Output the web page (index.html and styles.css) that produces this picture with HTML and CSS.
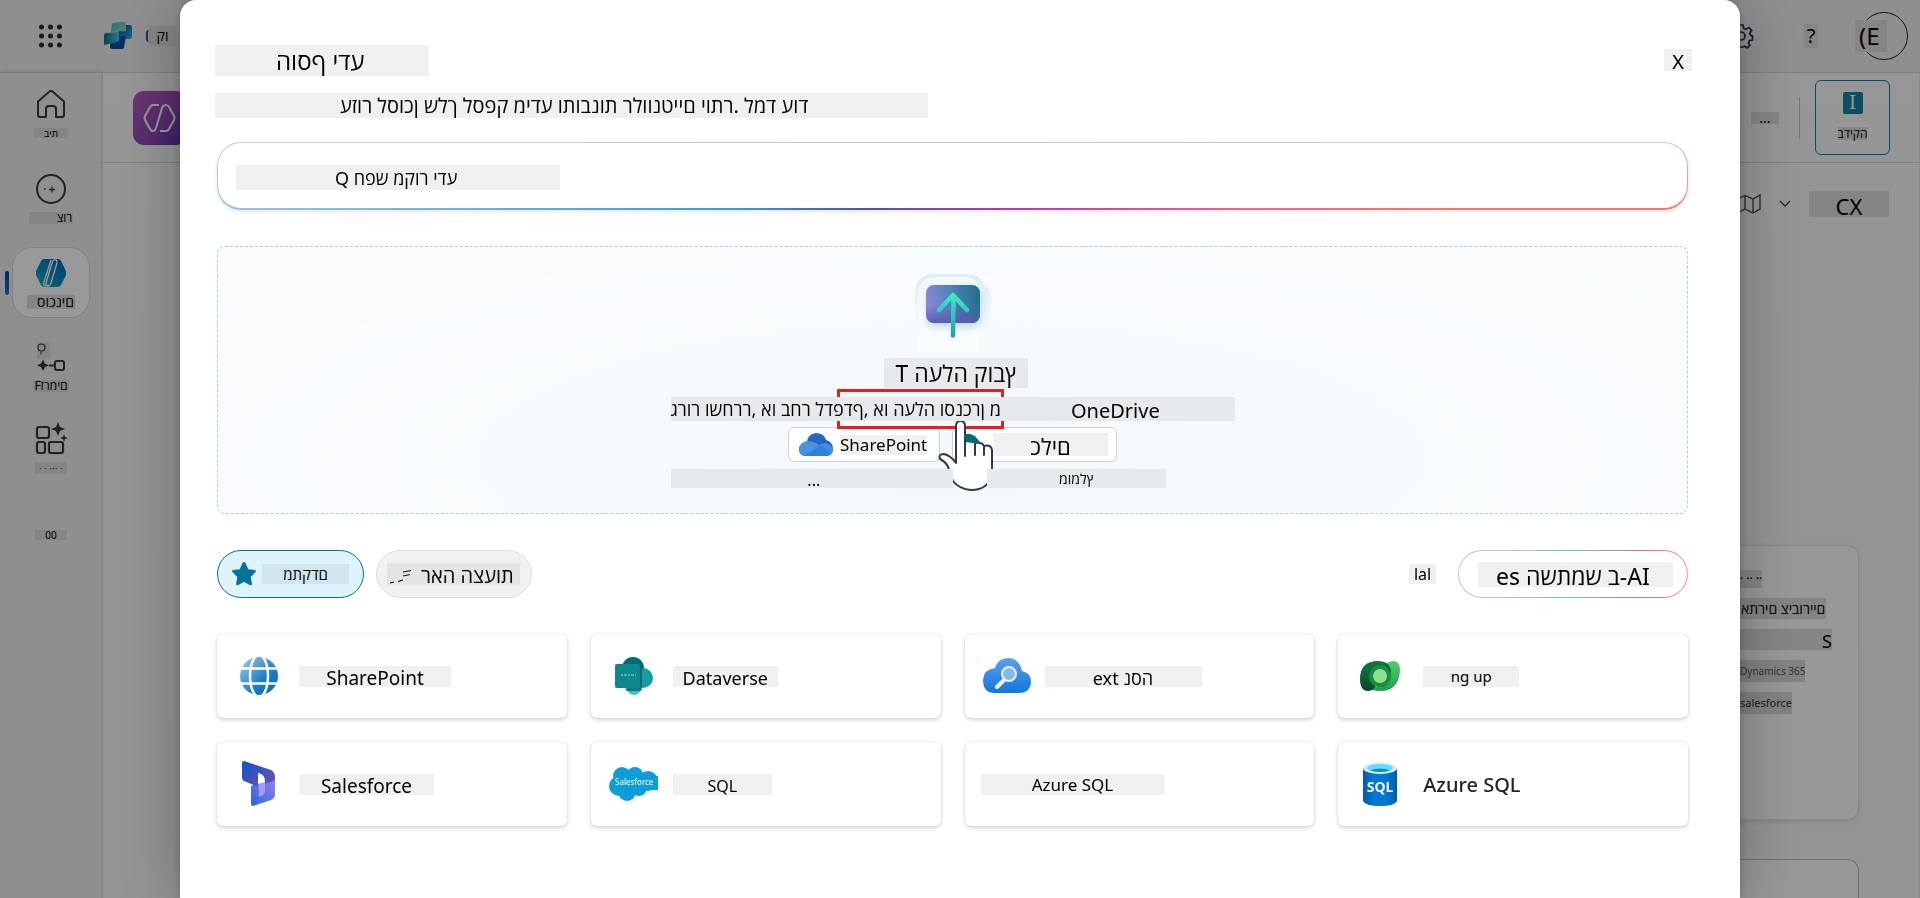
FILE: index.html
```html
<!DOCTYPE html>
<html lang="he">
<head>
<meta charset="utf-8">
<title>הוסף ידע</title>
<link rel="stylesheet" href="styles.css">
</head>
<body>
<div class="app">
  <header class="topbar">
    <button class="icon-button waffle" aria-label="Apps">
      <svg width="24" height="24" viewBox="0 0 24 24" fill="#2b2b33"><circle cx="2.500" cy="3" r="2.500"/><circle cx="11.500" cy="3" r="2.500"/><circle cx="20.500" cy="3" r="2.500"/><circle cx="2.500" cy="12" r="2.500"/><circle cx="11.500" cy="12" r="2.500"/><circle cx="20.500" cy="12" r="2.500"/><circle cx="2.500" cy="21" r="2.500"/><circle cx="11.500" cy="21" r="2.500"/><circle cx="20.500" cy="21" r="2.500"/></svg>
    </button>
    <svg class="brand" width="30" height="28" viewBox="0 0 30 28">
      <defs>
        <linearGradient id="b1" x1="0" y1="0" x2="1" y2="1"><stop offset="0" stop-color="#3cb4d8"/><stop offset="1" stop-color="#8fe8b4"/></linearGradient>
        <linearGradient id="b2" x1="0" y1="0" x2="1" y2="1"><stop offset="0" stop-color="#0a3f9e"/><stop offset="1" stop-color="#22b4e0"/></linearGradient>
        <linearGradient id="b3" x1="0" y1="0" x2="1" y2="0"><stop offset="0" stop-color="#12708f"/><stop offset="1" stop-color="#3bd0e4"/></linearGradient>
      </defs>
      <rect x="15" y="3" width="14" height="14" rx="2" fill="url(#b2)"/>
      <path d="M8 14h15l-2 11q0 2-2 2H9q-2 0-2-2z" fill="#064cab"/>
      <path d="M9 2q0-1 2-1l10-1q2 0 2 2v7L8 10z" fill="url(#b1)"/>
      <path d="M1 13q0-2 2-2l13-1v8q0 2-2 2L1 23z" fill="url(#b3)"/>
    </svg>
    <span class="brand-name"><span class="brand-arc"></span><span class="patch bidi">קו</span><span class="brand-tail">p</span></span>
    <span class="spacer"></span>
    <button class="icon-button" aria-label="Settings">
      <svg width="26" height="26" viewBox="0 0 26 26" fill="none" stroke="#1f3350" stroke-width="1.700"><path d="M11 2h4l.700 3.400 2.300 1 2.900-1.900 2.800 2.800-1.900 2.900 1 2.300 1.700.500v4l-3 .600-1 2.100 1.400 2.700-2.700 2.500-2.700-1.600-2 .900L13.800 24h-2.600l-.900-3.200-2.300-.900-2.700 1.600-2.700-2.600 1.700-2.800-1-2.100L2 13.500v-2l2-.600 1-2.200-1.800-2.900 2.700-2.700L8.600 5l1.700-.800z"/><circle cx="13" cy="13" r="4"/></svg>
    </button>
    <button class="icon-button patch help" aria-label="Help">?</button>
    <button class="avatar" aria-label="Account"><span class="patch">(E</span></button>
  </header>

  <div class="workspace">
    <nav class="rail">
      <a class="rail-item" href="#home">
        <svg width="30" height="30" viewBox="0 0 30 30" fill="none" stroke="#3a3a3a" stroke-width="2" stroke-linejoin="round"><path d="M2 11.500 13.500 1.500q1.500-1.200 3 0l11.500 10V25q0 2-2 2h-6v-8q0-3-3-3h-4q-3 0-3 3v8H4q-2 0-2-2z"/></svg>
        <span class="patch bidi rail-small">בית</span>
      </a>
      <a class="rail-item" href="#create">
        <svg width="30" height="30" viewBox="0 0 30 30" fill="none" stroke="#3a3a3a" stroke-width="2"><circle cx="15" cy="15" r="14"/><path d="M13 15.500h6M16 12.500v6M8 15h1.500" stroke-width="1.300"/></svg>
        <span class="patch bidi rail-end">צור</span>
      </a>
      <a class="rail-item active" href="#agents">
        <svg width="30" height="28" viewBox="0 0 30 28"><defs><linearGradient id="ag" x1="0" y1="1" x2="1" y2="0"><stop offset="0" stop-color="#14b2cc"/><stop offset="1" stop-color="#0a62b4"/></linearGradient></defs><path d="M8 0h14q2 0 3 2l5 10q1 2 0 4l-5 10q-1 2-3 2H8q-2 0-3-2L0 16q-1-2 0-4L5 2Q6 0 8 0z" fill="url(#ag)"/><path d="M15 1 8 23q-1 4 2 4M20 1q-3-1-4 3l-6 20q0 3 2 3 2 0 3-3l6-20q0-3-1-3" stroke="#fff" stroke-width="1.300" fill="none"/></svg>
        <span class="patch bidi rail-strong">סוכנים</span>
      </a>
      <a class="rail-item" href="#flows">
        <svg width="30" height="30" viewBox="0 0 30 30" fill="none" stroke="#3a3a3a" stroke-width="2"><rect x="1" y="0" width="13" height="17" fill="#dedede" stroke="none"/><path d="M13 23.500h6" /><rect x="19" y="19" width="9" height="9" rx="2"/><circle cx="5.500" cy="5.500" r="3.500" stroke-width="1.200"/><path d="M5 9.500v3" stroke-width="1"/><path d="M7 17.500l2 4 4 2-4 1.500-2 4-2-4-4-1.500 4-2z" fill="#3a3a3a" stroke="none"/></svg>
        <span class="patch bidi rail-flow">Fזרמים</span>
      </a>
      <a class="rail-item rail-tools" href="#tools">
        <svg width="34" height="32" viewBox="0 0 34 32" fill="none" stroke="#3a3a3a" stroke-width="2.200"><rect x="3" y="5" width="12" height="11" rx="2"/><rect x="3" y="20" width="8" height="11" rx="2"/><rect x="15" y="20" width="14" height="11" rx="2"/><path d="M24 0l2 5 5 2-5 2-2 5-2-5-5-2 5-2zM30 12l1 3 3 1-3 1-1 3-1-3-3-1 3-1z" fill="#3a3a3a" stroke="none"/></svg>
        <span class="patch rail-dots">· · ··· ·</span>
      </a>
      <a class="rail-item rail-last" href="#more"><span class="patch rail-small">00</span></a>
    </nav>

    <main class="page">
      <div class="agent-bar">
        <svg class="agent-logo" width="54" height="54" viewBox="0 0 54 54"><defs><linearGradient id="pl" x1="0" y1="0" x2="1" y2="1"><stop offset="0" stop-color="#b45cc0"/><stop offset="0.600" stop-color="#9048b8"/><stop offset="1" stop-color="#5230b8"/></linearGradient></defs><rect width="54" height="54" rx="11" fill="url(#pl)"/><path d="M26 14H20q-2 0-3 2l-5 9q-1 2 0 4l5 9q1 2 3 2 2 0 3-3l6-20q1-3 4-3 2 0 3 2l5 9q1 2 0 4l-5 9q-1 2-3 2h-6" fill="none" stroke="#fff" stroke-width="2"/></svg>
        <span class="spacer"></span>
        <span class="patch more">...</span>
        <span class="divider"></span>
        <button class="test-button">
          <span class="test-mark">I</span>
          <span class="patch bidi">בדיקה</span>
        </button>
      </div>
      <div class="toolbar">
        <svg width="24" height="24" viewBox="0 0 24 24" fill="none" stroke="#404040" stroke-width="1.300"><path d="M1 7l7-3.500 8 3.500 7-4v14l-7 4-8-4-7 4zM8 3.500v14M16 7v14"/></svg>
        <svg width="12" height="8" viewBox="0 0 12 8" fill="none" stroke="#404040" stroke-width="1.300"><path d="M1 1l5 5 5-5"/></svg>
        <span class="patch toolbar-label">CX</span>
      </div>
      <section class="side-card">
        <span class="patch side-dots">· ·· ··</span>
        <span class="patch bidi side-title">אתרים ציבוריים</span>
        <span class="patch side-s">S</span>
        <span class="patch side-faint">Dynamics 365</span>
        <span class="patch side-faint side-dark">salesforce</span>
      </section>
      <section class="side-card side-card-next"></section>
    </main>
  </div>
</div>

<div class="backdrop">
  <div class="dialog" role="dialog" aria-labelledby="dialog-title">
    <div class="dialog-head">
      <h1 id="dialog-title" class="chip bidi">הוסף ידע</h1>
      <button class="chip close">X</button>
    </div>
    <p class="chip bidi intro">עזור לסוכן שלך לספק מידע ותובנות רלוונטיים יותר. למד עוד</p>

    <div class="search">
      <input class="chip" type="text" aria-label="Search" placeholder="&#x202D;Q חפש מקור ידע">
    </div>

    <section class="drop">
      <svg class="upload-icon" width="76" height="80" viewBox="0 0 76 80">
        <defs>
          <linearGradient id="up" x1="0" y1="0.500" x2="1" y2="0.400"><stop offset="0" stop-color="#8f86dc"/><stop offset="0.450" stop-color="#4f83b8"/><stop offset="1" stop-color="#24708c"/></linearGradient>
          <linearGradient id="upl" x1="0" y1="0" x2="0" y2="1"><stop offset="0.550" stop-color="#5358a8" stop-opacity="0"/><stop offset="1" stop-color="#5a55b0" stop-opacity="0.900"/></linearGradient>
          <linearGradient id="arr" x1="0" y1="0" x2="0" y2="1"><stop offset="0" stop-color="#40e8c8"/><stop offset="1" stop-color="#2c9cb0"/></linearGradient>
          <linearGradient id="glass" x1="0" y1="0" x2="0" y2="1"><stop offset="0" stop-color="#dfecef"/><stop offset="0.500" stop-color="#f1f8fb"/><stop offset="1" stop-color="#fafcfe" stop-opacity="0"/></linearGradient>
          <filter id="soft" x="-30%" y="-30%" width="160%" height="160%"><feGaussianBlur stdDeviation="4"/></filter>
        </defs>
        <path d="M0 78V20Q0 0 20 0h30q16 0 18 10 8 4 8 14v54z" fill="url(#glass)"/>
        <path d="M3 78V22Q3 3 22 3h28q14 0 14 17v58z" fill="#fafdfe" opacity="0.700"/>
        <rect x="12" y="15" width="54" height="38" rx="8" fill="#a5c7de" filter="url(#soft)" opacity="0.700"/>
        <rect x="11" y="11" width="54" height="38" rx="8" fill="url(#up)"/>
        <rect x="11" y="11" width="54" height="38" rx="8" fill="url(#upl)"/>
        <path d="M38.500 22 38 61.500M24 36l14-15 14 15" fill="none" stroke="url(#arr)" stroke-width="4.500" stroke-linecap="round" stroke-linejoin="round"/>
      </svg>
      <h2 class="shade bidi drop-title">T העלה קובץ</h2>
      <p class="shade drop-text"><span class="bidi">גרור ושחרר, או בחר לדפדף, או העלה וסנכרן מ</span><span class="onedrive">OneDrive</span></p>
      <div class="sources">
        <span class="highlight"></span>
        <button class="source">
          <svg width="34" height="24" viewBox="0 0 34 24"><defs><linearGradient id="od" x1="0" y1="0" x2="0" y2="1"><stop offset="0" stop-color="#2f68c4"/><stop offset="1" stop-color="#1e58b8"/></linearGradient></defs><path d="M8 10Q8 1 17 0q8 0 10 7 7 2 7 9 0 7-7 7H7q-7 0-7-7 0-5 8-6z" fill="url(#od)"/><path d="M8 8Q1 9 0 16q0 7 8 7l14-10Q15 8 8 8z" fill="#4a94e4"/><path d="M3 22 20 12q8-5 14 3 0 8-8 8H7z" fill="#3f8fe2"/><path d="M5 23 22 12l9 8q-2 3-6 3z" fill="#2f80da"/></svg>
          <span class="chip">SharePoint</span>
        </button>
        <button class="source source-tools">
          <span class="chip bidi">כלים</span>
        </button>
        <svg class="pointer" width="62" height="76" viewBox="0 0 62 76" fill="#fff" stroke="#34374a" stroke-width="2" stroke-linejoin="round" stroke-linecap="round"><path d="M19 44V7q0-5 4.500-5T28 7v14q6-3 10 3 6-2 9 3 7-2 8 4v21q0 10-7 15-5 4-14 4-12-1-18-9l-4-11Q11 44 3 40q-2-5 4-5 6 1 12 9z"/><path d="M27 16q9-5 17 9l-16-2z" fill="#036c70" stroke="none"/><path d="M28 20v17M38 25v11M47 28v8" fill="none"/></svg>
      </div>
      <div class="notes">
        <span class="shade note-dots">...</span>
        <span class="shade bidi note-rec">מומלץ</span>
      </div>
    </section>

    <div class="filters">
      <button class="pill pill-on">
        <svg width="24" height="24" viewBox="0 0 24 24" fill="#05729c"><path d="M12 0q1 0 1.600 1.200l2.700 6 6.400.900q1.700.500.900 1.900l-4.900 5 1.300 6.900q0 1.800-1.800 1.300L12 20l-6.200 3.200q-1.800.500-1.700-1.300L5.300 15 .400 10q-.800-1.400.900-1.900l6.400-.900 2.700-6Q11 0 12 0z"/></svg>
        <span class="bidi">מתקדם</span>
      </button>
      <button class="pill pill-off">
        <span class="pill-box"><svg width="24" height="16" viewBox="0 0 24 16" stroke="#111" stroke-width="1.200" fill="none"><path d="M14 4l8-1.500M14 8l7-1.500M1 15l4-1M9 13.500l5-1.500"/></svg><span class="bidi">ראה הצעות</span></span>
      </button>
      <span class="spacer"></span>
      <span class="chip lal">lal</span>
      <button class="pill pill-ai"><span class="chip bidi">es השתמש ב-AI</span></button>
    </div>

    <div class="grid">
      <button class="card">
        <svg width="40" height="40" viewBox="0 0 40 40"><defs><linearGradient id="gl" x1="0" y1="0" x2="1" y2="1"><stop offset="0" stop-color="#a9cdea"/><stop offset="0.600" stop-color="#1b7cc9"/><stop offset="1" stop-color="#0a62b4"/></linearGradient></defs><circle cx="20" cy="20" r="19" fill="url(#gl)"/><g stroke="#fff" stroke-width="2.500" fill="none"><ellipse cx="20" cy="20" rx="9" ry="21"/><path d="M0 12.500h40M0 27.500h40"/></g></svg>
        <span class="chip name-sharepoint">SharePoint</span>
      </button>
      <button class="card">
        <svg width="40" height="40" viewBox="0 0 40 40"><circle cx="20" cy="12" r="11" fill="#036c70"/><circle cx="30" cy="22" r="10" fill="#1a9ba1"/><circle cx="21" cy="32" r="7" fill="#37c6d0"/><path d="M8 10h21v23q0 2-2 2H13z" fill="#03565b" opacity="0.700"/><rect x="2" y="8" width="25" height="24" rx="2" fill="#0f888c"/><path d="M8 19h15" stroke="#d5f0f0" stroke-width="1" stroke-dasharray="2 1 3 1" opacity="0.700"/></svg>
        <span class="chip name-dataverse">Dataverse</span>
      </button>
      <button class="card card-wide-icon">
        <svg width="48" height="36" viewBox="0 0 48 36"><defs><linearGradient id="cs" x1="0" y1="0" x2="0" y2="1"><stop offset="0" stop-color="#5ea0ef"/><stop offset="1" stop-color="#1077db"/></linearGradient></defs><path d="M12 35Q0 35 0 22q1-11 12-12Q15 0 25 0q11 0 14 13 9 2 9 11-1 11-12 11z" fill="url(#cs)"/><path d="M14 29l8-8" stroke="#f2f2f2" stroke-width="4" stroke-linecap="round"/><circle cx="26" cy="16" r="7" fill="#83b9f9" stroke="#f2f2f2" stroke-width="2"/></svg>
        <span class="chip bidi name-next">ext נסה</span>
      </button>
      <button class="card card-loose">
        <svg width="40" height="40" viewBox="0 0 40 40"><defs><linearGradient id="dv1" x1="0" y1="0" x2="0" y2="1"><stop offset="0" stop-color="#0e7a3e"/><stop offset="1" stop-color="#064a2b"/></linearGradient><linearGradient id="dv2" x1="0" y1="0" x2="0" y2="1"><stop offset="0" stop-color="#51d267"/><stop offset="1" stop-color="#1f9c50"/></linearGradient></defs><path d="M24 12q3-7 9-7 7 0 7 9-1 21-20 21-8 0-10-3 13-1 14-11z" fill="url(#dv2)"/><path d="M0 23Q0 5 18 5q12 0 13 10 0 9-8 12 1-6-3-9l-6 4q-1 5 2 8-3 5-8 5-8 0-8-12z" fill="url(#dv1)"/><circle cx="20" cy="20" r="11" fill="#1b8a44"/><circle cx="20" cy="20" r="7" fill="#8ae38a"/></svg>
        <span class="chip name-small">ng up</span>
      </button>
      <button class="card">
        <svg width="40" height="46" viewBox="0 0 40 46"><defs><linearGradient id="d1" x1="0" y1="0" x2="1" y2="1"><stop offset="0" stop-color="#0b53ce"/><stop offset="1" stop-color="#7252aa"/></linearGradient><linearGradient id="d2" x1="1" y1="0" x2="0" y2="1"><stop offset="0" stop-color="#a47ff0"/><stop offset="1" stop-color="#2266e3"/></linearGradient></defs><path d="M12 25l24-10v18q0 4-4 6l-18 6q-2 0-2-2z" fill="url(#d2)"/><path d="M3 2q0-2 2-2l27 9q4 2 4 7 0 4-4 5l-15 4-12-5q-2-1-2-3z" fill="url(#d1)"/><path d="M19 13q7 0 7 7v9q0 6-6 7z" fill="#a79bf3"/><path d="M19 12q7 1 7 9l-7 2z" fill="#fff"/></svg>
        <span class="chip name-salesforce">Salesforce</span>
      </button>
      <button class="card card-wide-icon">
        <svg width="50" height="36" viewBox="0 0 50 36"><g fill="#0d9ddb"><circle cx="13" cy="10" r="9"/><circle cx="26" cy="9" r="8"/><circle cx="39" cy="15" r="10"/><circle cx="10" cy="20" r="10"/><circle cx="18" cy="26" r="9"/><circle cx="30" cy="22" r="8"/><rect x="8" y="10" width="41" height="14"/></g><text x="6" y="19" class="cloud-text">Salesforce</text></svg>
        <span class="chip name-sql">SQL</span>
      </button>
      <button class="card card-plain">
        <span class="chip name-azure">Azure SQL</span>
      </button>
      <button class="card card-loose">
        <svg width="40" height="46" viewBox="0 0 40 46"><defs><linearGradient id="sq" x1="0" y1="0" x2="1" y2="0"><stop offset="0" stop-color="#005ba1"/><stop offset="0.300" stop-color="#0078d4"/><stop offset="0.700" stop-color="#0078d4"/><stop offset="1" stop-color="#005ba1"/></linearGradient></defs><path d="M3 7v33q2 5 17 5t17-5V7z" fill="url(#sq)"/><ellipse cx="20" cy="7" rx="17" ry="6" fill="#e8e8e8"/><ellipse cx="20" cy="7" rx="13" ry="4" fill="#50e6ff"/><path d="M10 9.500q10-4 20 0-10 3-20 0z" fill="#198ab3"/><text x="20" y="31" class="sql-text" text-anchor="middle">SQL</text></svg>
        <span class="name-plain">Azure SQL</span>
      </button>
    </div>
  </div>
</div>
</body>
</html>
```
FILE: styles.css
```css
* { box-sizing: border-box; }
body, h1, h2, p { margin: 0; font-weight: 400; }
body {
  height: 100vh;
  overflow: hidden;
  font-family: "Noto Sans", "Open Sans", sans-serif;
  font-size: 16px;
  color: #000;
}
button { font: inherit; color: inherit; border: 0; padding: 0; background: none; }
a { color: inherit; text-decoration: none; }
svg { display: block; flex: none; }
.bidi { direction: ltr; unicode-bidi: bidi-override; }
.spacer { flex: 1; }
.patch { background: #dedede; white-space: nowrap; }
.chip { background: #f0f0f0; white-space: nowrap; }
.shade { background: #e7eaed; white-space: nowrap; }

/* Page behind the dialog */
.app { height: 100%; display: flex; flex-direction: column; background: #eee; }
.topbar { height: 73px; flex: none; display: flex; align-items: center; padding: 0 12px 0 39px; border-bottom: 1px solid #d4d4d4; }
.brand { margin-left: 40px; }
.brand-name { display: flex; align-items: center; margin-left: 13px; }
.brand-name .patch { width: 27px; text-align: center; font-size: 14px; line-height: 20px; }
.brand-arc { width: 3px; height: 12px; border-left: 2px solid #1c5f90; border-radius: 4px 0 0 4px; }
.brand-tail { margin-left: 2px; color: #0f7fb0; font-size: 24px; line-height: 32px; }
.help { width: 14px; margin-left: 50px; font-size: 20px; line-height: 24px; }
.avatar { width: 48px; height: 48px; margin-left: 42px; border: 1px solid #222; border-radius: 50%; display: flex; align-items: center; }
.avatar .patch { font-size: 24px; line-height: 32px; margin-left: -6px; padding: 0 7px 0 4px; }

.workspace { flex: 1; min-height: 0; display: flex; }
.rail { width: 103px; flex: none; padding: 6px 11px 6px 12px; display: flex; flex-direction: column; gap: 13px; border-right: 2px solid #dcdcdc; box-shadow: 0 0 6px #c4c4c4; }
.rail-item { height: 71px; flex: none; display: flex; flex-direction: column; align-items: center; gap: 8px; padding-top: 11px; border-radius: 20px; font-size: 12px; line-height: 14px; position: relative; }
.active { background: #fff; border: 1px solid #d8d8d8; }
.active::before { content: ""; position: absolute; left: -8px; top: 23px; width: 4px; height: 24px; border-radius: 2px; background: linear-gradient(#0a3f9e, #0a80c8); }
.rail-small { font-size: 10px; line-height: 10px; padding: 0 10px; }
.rail-end { padding: 0 1px 0 28px; line-height: 12px; }
.rail-strong { padding: 0 1px 0 10px; font-size: 14px; }
.rail-flow { line-height: 12px; padding: 0 1px; }
.rail-tools { padding-top: 7px; }
.rail-dots { padding: 0 4px; font-size: 10px; line-height: 12px; color: #444; }
.rail-last { justify-content: center; padding: 0; }

.page { flex: 1; min-width: 0; background: linear-gradient(#fafafa, #f6f8fb); display: flex; flex-direction: column; align-items: flex-end; border-right: 1px solid #e4e4e4; }
.agent-bar { align-self: stretch; height: 90px; flex: none; display: flex; align-items: center; padding: 0 29px 0 30px; border-bottom: 1px solid #d4d4d4; }
.more { width: 28px; line-height: 12px; font-size: 14px; text-align: center; }
.divider { width: 1px; height: 42px; margin: 0 15px 0 20px; background: #c4c4c4; }
.test-button { width: 75px; height: 75px; border: 1px solid #0f7fa6; border-radius: 6px; display: flex; flex-direction: column; align-items: center; gap: 13px; padding-top: 11px; font-size: 12px; line-height: 13px; }
.test-mark { width: 20px; font: 18px/22px "DejaVu Serif", serif; color: #fff; background: #1482a4; border-radius: 2px; }
.toolbar { flex: none; display: flex; align-items: center; gap: 18px; padding: 28px 30px 0 0; }
.toolbar-label { width: 80px; height: 26px; text-align: center; font-size: 22px; line-height: 30px; }
.side-card { width: 320px; height: 275px; flex: none; margin: 328px 60px 0 0; padding: 24px 0 0 200px; display: flex; flex-direction: column; align-items: flex-start; gap: 10px; border: 1px solid #e2e2e2; border-radius: 12px; box-shadow: 0 2px 6px #ddd; background: #fdfdfd; }
.side-card-next { margin-top: 39px; flex: 1; border-color: #bbb; border-bottom: 0; border-radius: 12px 12px 0 0; box-shadow: none; }
.side-dots { font-size: 12px; line-height: 18px; }
.side-title { font-size: 14px; line-height: 21px; padding: 0 1px; height: 21px; }
.side-s { width: 92px; height: 21px; text-align: right; font-size: 18px; line-height: 25px; }
.side-faint { font-size: 10px; line-height: 22px; color: #555; background: #d8d8d8; }
.side-dark { font-size: 11px; color: #333; }

/* Dialog */
.backdrop { position: fixed; inset: 0; padding: 0 180px; background: rgba(0, 0, 0, .4); display: flex; }
.dialog { flex: 1; min-width: 0; background: #fff; border-radius: 16px 16px 0 0; padding: 45px 52px 0 35px; box-shadow: 0 0 8px rgba(0, 0, 0, .2), 0 8px 64px rgba(0, 0, 0, .3); }
.dialog-head { display: flex; justify-content: space-between; align-items: flex-start; }
.dialog h1 { width: 214px; padding-left: 61px; font-size: 24px; line-height: 31px; }
.close { width: 28px; height: 22px; margin: 4px -4px 0 0; font-size: 20px; line-height: 26px; }
.intro { width: 713px; max-width: 100%; margin-top: 17px; padding-left: 125px; font-size: 20px; line-height: 25px; }
.search { margin: 24px 0 0 2px; height: 68px; padding: 22px 18px; border: 1px solid transparent; border-bottom-width: 2px; border-radius: 24px;
  background: linear-gradient(#fff, #fff) padding-box, linear-gradient(rgba(208, 208, 208, .9), rgba(208, 208, 208, 0)) border-box, linear-gradient(90deg, #9cc4dc 0%, #3c9cd0 35%, #5050a8 44%, #b83cac 55%, #e86890 70%, #ee7c68 85%, #ee7c68 100%) border-box;
  box-shadow: 0 2px 4px rgba(0, 0, 0, .1); }
.search input { display: block; width: 324px; height: 25px; border: 0; padding: 0 0 0 99px; font: 18px/24px "Noto Sans", "Open Sans", sans-serif; }
.search input::placeholder { color: #000; opacity: 1; }

.drop { margin: 36px 0 0 2px; height: 268px; padding-top: 27px; display: flex; flex-direction: column; align-items: center; border: 1px dashed #a8d0de; border-radius: 8px; background: radial-gradient(ellipse at 50% 80%, #f3f8fb, #f8fbfd 45%, rgba(248, 251, 253, 0) 100%), #fafcfe; }
.upload-icon { flex: none; }
.drop-title { margin: 4px 0 0 7px; width: 144px; height: 30px; text-align: center; font-size: 23px; line-height: 30px; }
.drop-text { z-index: 1; width: 564px; margin-top: 9px; display: flex; font-size: 18px; line-height: 24px; height: 24px; }
.onedrive { margin-left: 70px; font-size: 20px; line-height: 28px; }
.sources { position: relative; display: flex; gap: 12px; margin-top: 6px; }
.source { width: 152px; height: 35px; display: flex; align-items: center; gap: 7px; padding: 0 10px; border: 1px solid #ccd0d3; border-radius: 6px; background: #fff; font-size: 17px; line-height: 20px; }
.source-tools { width: 165px; padding: 0 8px; justify-content: flex-end; }
.source-tools .chip { position: relative; z-index: 1; width: 115px; height: 23px; font-size: 22px; line-height: 27px; }
.highlight { position: absolute; left: 49px; top: -38px; width: 167px; height: 40px; border: 3px solid #ea1c1c; }
.pointer { position: absolute; left: 149px; top: -8px; }
.notes { z-index: 1; display: flex; gap: 34px; margin: 7px 0 0 -69px; width: 495px; }
.note-dots { flex: 281; height: 19px; text-align: center; font-size: 16px; line-height: 23px; padding-left: 4px; }
.note-rec { flex: 180; text-align: center; font-size: 14px; line-height: 19px; }

.filters { display: flex; align-items: center; gap: 12px; margin: 36px 0 0 2px; }
.pill { height: 48px; display: flex; align-items: center; border: 1px solid #ddd; border-radius: 24px; }
.pill-on { width: 147px; padding: 0 14px; gap: 6px; background: #def3fc; border-color: #05729c; }
.pill-on span { width: 90px; background: #d1e5ee; line-height: 20px; font-size: 15px; }
.pill-off { width: 156px; padding: 0 10px; background: #f3f1f0; }
.pill-box { display: flex; align-items: center; gap: 8px; height: 22px; background: #e5e4e3; font-size: 20px; line-height: 22px; white-space: nowrap; padding: 4px 6px 0 2px; }
.lal { width: 27px; text-align: center; font-size: 16px; line-height: 20px; margin-right: 10px; }
.pill-ai { width: 230px; padding: 0 19px; border-color: transparent; background: linear-gradient(#fff, #fff) padding-box, linear-gradient(90deg, #c4c4e8, #b0b8e4 25%, #6cbce8 50%, #d864b8 80%, #f89898 100%) border-box; }
.pill-ai .chip { flex: 1; height: 25px; margin-right: -5px; font-size: 23px; line-height: 29px; text-align: left; padding-left: 18px; }

.grid { display: grid; grid-template-columns: repeat(4, 1fr); gap: 24px; margin: 36px 0 0 2px; }
.card { height: 84px; display: flex; align-items: center; gap: 20px; padding: 0 22px; background: #fff; border-radius: 6px; box-shadow: 0 0 2px rgba(0, 0, 0, .16), 0 2px 4px rgba(0, 0, 0, .16); line-height: 25px; }
.card-wide-icon { padding-left: 18px; gap: 14px; }
.card-plain { padding-left: 16px; }
.card-loose { gap: 23px; }
.card .chip { text-align: center; height: 21px; }
.name-sharepoint { width: 152px; font-size: 19px; }
.name-dataverse { width: 105px; font-size: 18px; }
.name-next { width: 157px; font-size: 18px; }
.card .name-small { width: 96px; font-size: 15px; line-height: 21px; }
.name-salesforce { width: 135px; font-size: 19px; }
.name-sql { width: 99px; font-size: 16px; }
.card .name-azure { width: 184px; font-size: 17px; line-height: 21px; }
.name-plain { font-size: 20px; font-weight: 500; color: #242424; }
.cloud-text { font: 8px "Noto Sans", sans-serif; fill: #fff; }
.sql-text { font: 700 14px "Noto Sans", sans-serif; fill: #f2f2f2; }
```
